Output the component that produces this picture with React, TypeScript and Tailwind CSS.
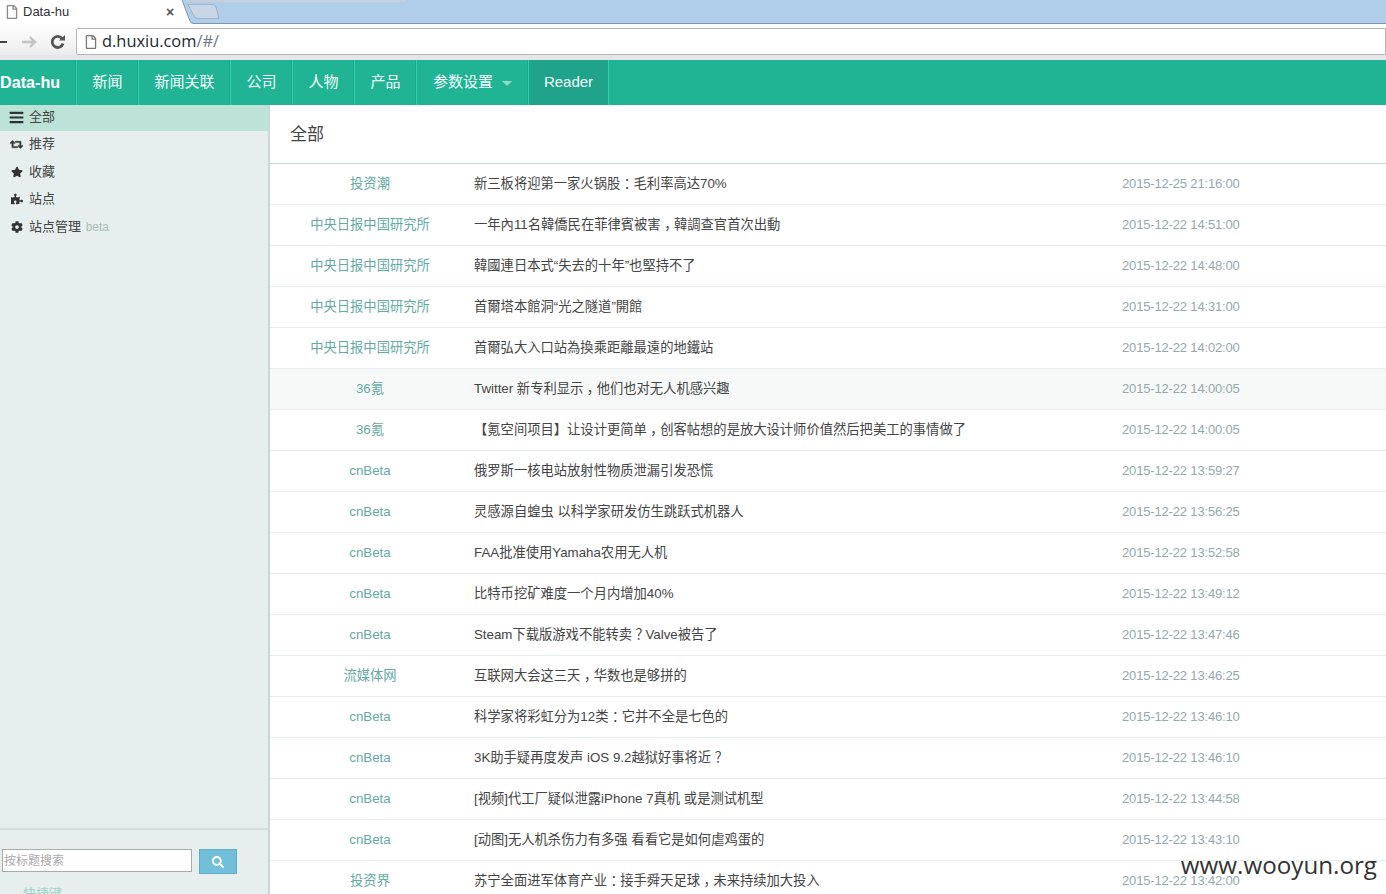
import { FaBars, FaRetweet, FaStar, FaPuzzlePiece, FaCog, FaSearch, FaRegFile } from "react-icons/fa";

const SANS = "font-['Liberation_Sans','Noto_Sans_CJK_SC',sans-serif]";

const rows = [
  ["投资潮", "新三板将迎第一家火锅股：毛利率高达70%", "2015-12-25 21:16:00"],
  ["中央日报中国研究所", "一年內11名韓僑民在菲律賓被害，韓調查官首次出動", "2015-12-22 14:51:00"],
  ["中央日报中国研究所", "韓國連日本式“失去的十年”也堅持不了", "2015-12-22 14:48:00"],
  ["中央日报中国研究所", "首爾塔本館洞“光之隧道”開館", "2015-12-22 14:31:00"],
  ["中央日报中国研究所", "首爾弘大入口站為換乘距離最遠的地鐵站", "2015-12-22 14:02:00"],
  ["36氪", "Twitter 新专利显示，他们也对无人机感兴趣", "2015-12-22 14:00:05"],
  ["36氪", "【氪空间项目】让设计更简单，创客帖想的是放大设计师价值然后把美工的事情做了", "2015-12-22 14:00:05"],
  ["cnBeta", "俄罗斯一核电站放射性物质泄漏引发恐慌", "2015-12-22 13:59:27"],
  ["cnBeta", "灵感源自蝗虫 以科学家研发仿生跳跃式机器人", "2015-12-22 13:56:25"],
  ["cnBeta", "FAA批准使用Yamaha农用无人机", "2015-12-22 13:52:58"],
  ["cnBeta", "比特币挖矿难度一个月内增加40%", "2015-12-22 13:49:12"],
  ["cnBeta", "Steam下载版游戏不能转卖？Valve被告了", "2015-12-22 13:47:46"],
  ["流媒体网", "互联网大会这三天，华数也是够拼的", "2015-12-22 13:46:25"],
  ["cnBeta", "科学家将彩虹分为12类：它并不全是七色的", "2015-12-22 13:46:10"],
  ["cnBeta", "3K助手疑再度发声 iOS 9.2越狱好事将近？", "2015-12-22 13:46:10"],
  ["cnBeta", "[视频]代工厂疑似泄露iPhone 7真机 或是测试机型", "2015-12-22 13:44:58"],
  ["cnBeta", "[动图]无人机杀伤力有多强 看看它是如何虐鸡蛋的", "2015-12-22 13:43:10"],
  ["投资界", "苏宁全面进军体育产业：接手舜天足球，未来持续加大投入", "2015-12-22 13:42:00"],
];

const navItems = [
  { label: "新闻", w: "w-[62px]" },
  { label: "新闻关联", w: "w-[92px]" },
  { label: "公司", w: "w-[62px]" },
  { label: "人物", w: "w-[62px]" },
  { label: "产品", w: "w-[62px]" },
];

function BrowserBar() {
  return (
    <div className="h-[60px] shrink-0 flex flex-col overflow-hidden bg-[#e6e6e6]">
      <div className="h-[24px] shrink-0 flex bg-[#b0cdea]">
        <div className="relative w-[178px] h-full bg-white flex items-center pl-[5px]">
          <FaRegFile className="text-[#8a8a8a] text-[14px]" />
          <span className="ml-[4px] text-[13px] text-[#333] font-['Liberation_Sans',sans-serif]">Data-hu</span>
          <span className="absolute left-[166px] top-[2px] text-[14px] font-bold text-[#555] font-['Liberation_Sans',sans-serif]">×</span>
        </div>
        <svg width="240" height="24" viewBox="0 0 240 24" className="shrink-0">
          <path d="M0 0 H4 L12 21 Q13 24 16 24 H0 Z" fill="#fff" />
          <path d="M4 0 L12 21 Q13 23.5 16 23.5 H240" fill="none" stroke="#7f95ab" strokeWidth="1" />
          <path d="M10 4.5 H35 Q37 4.5 38 7 L41 18.5 H19 Q17 18.5 16 16 Z" fill="#c8d6e6" stroke="#9fb3c9" strokeWidth="1" />
          <rect x="8" y="0" width="196" height="2" fill="#c5d0dc" />
          <rect x="202" y="0" width="26" height="2" fill="#c5d0dc" />
        </svg>
        <div className="flex-1 border-b border-b-[#7f95ab]" />
      </div>
      <div className="h-[31px] shrink-0 pt-[4px] bg-[linear-gradient(#fff,#ececec)]">
        <div className="h-[27px] flex items-center">
          <div className="w-[7px] h-[2px] bg-[#444] mr-[14px]" />
          <svg width="16" height="14" viewBox="0 0 16 14" className="mr-[13px]">
            <path d="M1 7 H14 M9 2 L14 7 L9 12" fill="none" stroke="#c3c3c3" strokeWidth="2.4" />
          </svg>
          <svg width="16" height="16" viewBox="0 0 16 16" className="mr-[10px]">
            <path d="M13 9.5 A5.5 5.5 0 1 1 12 4.5" fill="none" stroke="#555" strokeWidth="2.8" />
            <path d="M9 6.5 H15 V1 Z" fill="#555" />
          </svg>
          <div className="flex-1 h-[27px] bg-white border border-[#b5b5b5] rounded-l-[2px] flex items-center pl-[7px]">
            <FaRegFile className="text-[#777] text-[14px]" />
            <span className="ml-[4px] text-[16.4px] text-[#1c2733] font-['Open_Sans','Liberation_Sans',sans-serif]">
              d.huxiu.com<span className="text-[#6f7780]">/#/</span>
            </span>
          </div>
        </div>
      </div>
      <div className="flex-1 bg-[#e6e6e6]" />
    </div>
  );
}

function TopNav() {
  const sep = "border-r border-r-[#2fd3ab] shadow-[inset_-1px_0_0_#19a98c]";
  const item = "shrink-0 flex items-center text-[15px] text-[#f4fffb]";
  return (
    <div className={`h-[45px] shrink-0 flex bg-[#20b495] ${SANS}`}>
      <div className={`w-[77px] shrink-0 flex items-center ${sep}`}>
        <span className="text-[16.2px] font-bold text-white">Data-hu</span>
      </div>
      {navItems.map((n) => (
        <div key={n.label} className={`${n.w} ${item} justify-center ${sep}`}>
          {n.label}
        </div>
      ))}
      <div className={`w-[112px] ${item} pl-[16px] ${sep}`}>
        参数设置
        <span className="ml-[9px] mt-[1px] w-0 h-0 border-x-[5px] border-x-transparent border-t-[5px] border-t-[#8edcc8]" />
      </div>
      <div className={`w-[80px] ${item} justify-center bg-[#1fa38a] ${sep}`}>Reader</div>
    </div>
  );
}

function SideItem({ icon, children, active, h }: any) {
  return (
    <div className={`${h} flex items-center pl-[10px] text-[13px] text-[#444] ${active ? "bg-[#bde2d7]" : ""}`}>
      <span className="w-[13px] flex justify-center text-[#333] text-[12px]">{icon}</span>
      <span className="ml-[6px]">{children}</span>
    </div>
  );
}

function Sidebar() {
  return (
    <div className={`w-[270px] shrink-0 flex flex-col bg-[#e6efed] border-r-2 border-r-[#c9d8d5] overflow-hidden ${SANS}`}>
      <SideItem icon={<FaBars className="text-[15px] scale-x-110" />} active h="h-[26px] pb-[2px]">全部</SideItem>
      <SideItem icon={<FaRetweet className="text-[15px] stroke-[24px]" />} h="h-[28px] pb-[2px]">推荐</SideItem>
      <SideItem icon={<FaStar />} h="h-[27px] pb-[2px]">收藏</SideItem>
      <SideItem icon={<FaPuzzlePiece />} h="h-[27px] pb-[1px]">站点</SideItem>
      <SideItem icon={<FaCog />} h="h-[28px]">
        站点管理 <span className="ml-[1px] text-[12px] text-[#a9bdb9]">beta</span>
      </SideItem>
      <div className="mt-auto h-[66px] border-t-2 border-t-[#d2dcda] pt-[19px]">
        <div className="flex pl-[2px]">
          <input
            readOnly
            placeholder="按标题搜索"
            className="w-[190px] h-[23px] bg-white border border-[#aaa] px-[1px] text-[12px] placeholder:text-[#aaa] outline-none"
          />
          <div className="ml-[7px] w-[38px] h-[25px] bg-[#71bfd8] border border-[#64adc6] flex items-center justify-center text-white text-[12px]">
            <FaSearch />
          </div>
        </div>
        <div className="mt-[10px] pl-[23px] text-[13px] text-[#9fcfc8]">快捷键</div>
      </div>
    </div>
  );
}

// full-width punctuation sits in the middle of its cell in the reference
function Title({ text }: { text: string }) {
  return (
    <>
      {text.split(/([，：？])/).map((part, i) =>
        i % 2 === 1 ? (
          <span key={i} className="pl-[3.5px] tracking-[-3.5px]">{part}</span>
        ) : (
          <span key={i}>{part}</span>
        )
      )}
    </>
  );
}

function NewsRow({ row, idx }: { row: string[]; idx: number }) {
  return (
    <div className={`h-[41px] shrink-0 flex items-center pb-[1px] border-b border-b-[#e6efed] ${idx === 5 ? "bg-[#f7f9f8]" : ""}`}>
      <div className="w-[200px] text-center text-[13.3px] text-[#62aaa2]">{row[0]}</div>
      <div className="w-[648px] ml-[4px] text-[13.3px] text-[#444] whitespace-nowrap">
        <Title text={row[1]} />
      </div>
      <div className="text-[13px] tracking-[-0.16px] text-[#93a9ab]">{row[2]}</div>
    </div>
  );
}

export default function App() {
  return (
    <div className={`relative w-[1386px] h-[894px] overflow-hidden flex flex-col bg-white ${SANS}`}>
      <BrowserBar />
      <TopNav />
      <div className="flex-1 flex min-h-0">
        <Sidebar />
        <div className="flex-1 flex flex-col min-w-0 overflow-hidden">
          <div className="h-[59px] shrink-0 flex items-center pl-[20px] pt-[2px] text-[17px] text-[#444] border-b border-b-[#bfe3d9]">
            全部
          </div>
          {rows.map((r, i) => (
            <NewsRow key={i} row={r} idx={i} />
          ))}
        </div>
      </div>
      <div className="absolute right-[9px] bottom-[17px] text-[24.2px] leading-none text-[#333] font-['Open_Sans',sans-serif]">
        www.wooyun.org
      </div>
    </div>
  );
}
